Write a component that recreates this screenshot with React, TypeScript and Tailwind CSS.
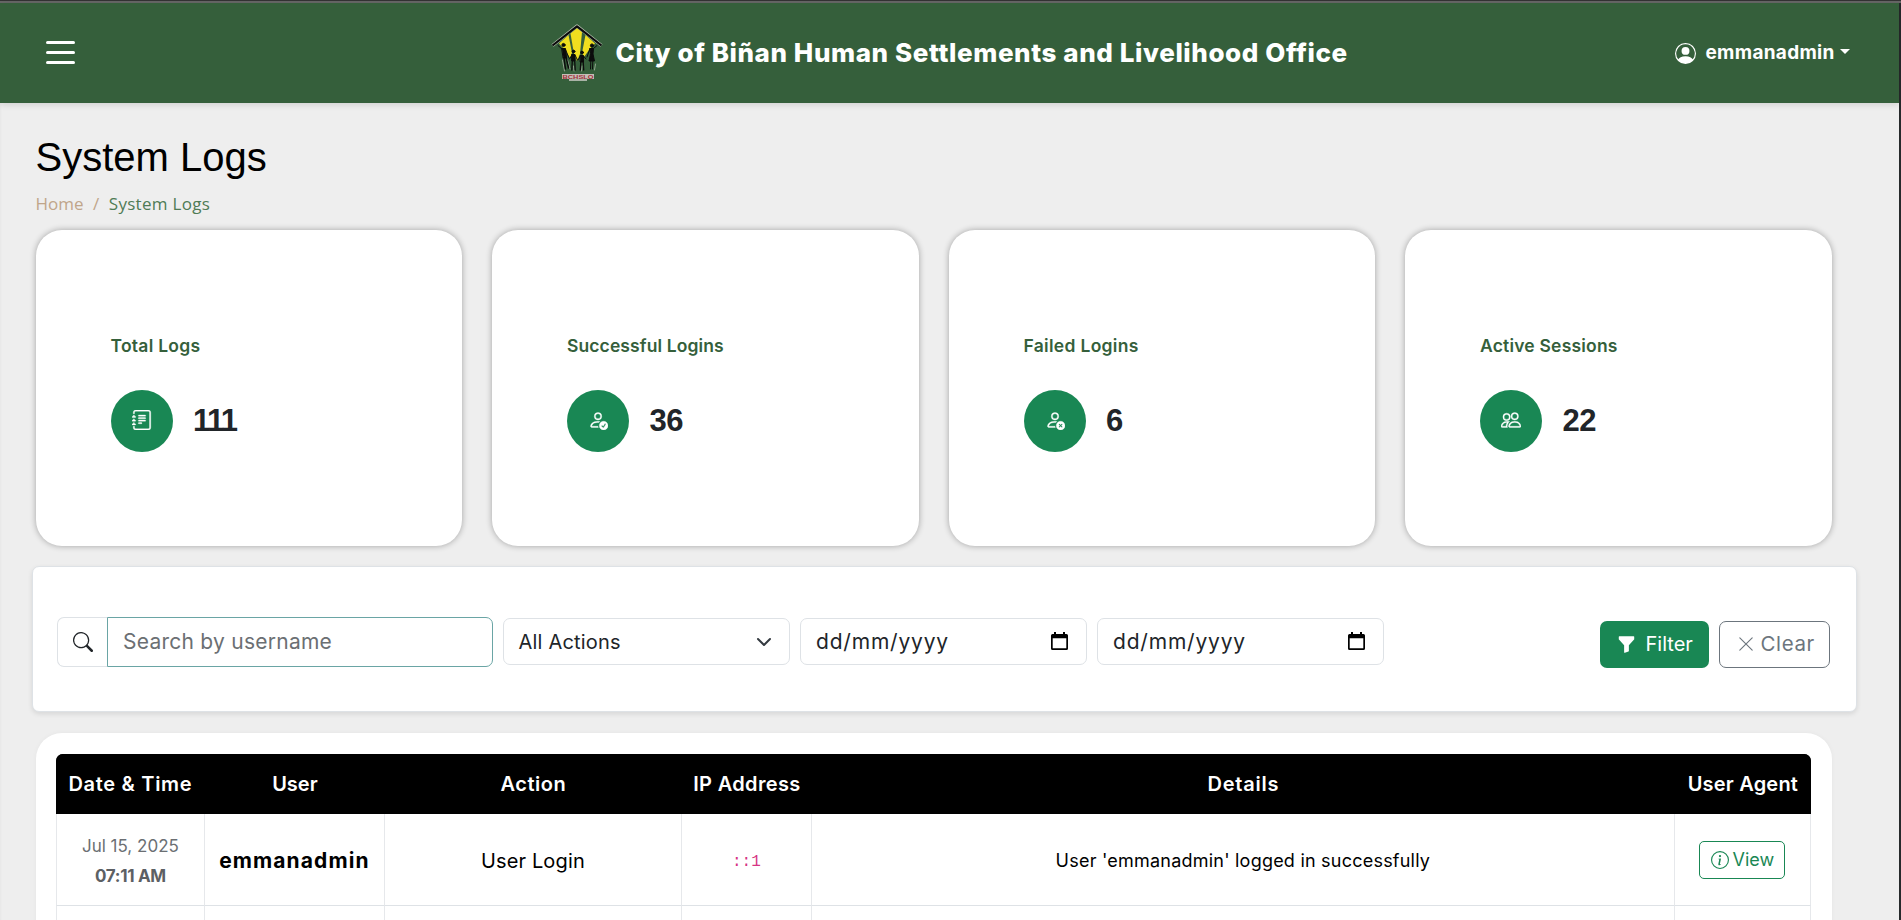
import React from "react";
import type { ReactNode } from "react";
import {
  BsFunnelFill,
  BsInfoCircle,
  BsJournalText,
  BsPeople,
  BsPersonCheck,
  BsPersonCircle,
  BsPersonX,
  BsSearch,
  BsXLg,
} from "react-icons/bs";

function Logo() {
  return (
    <svg className="h-[58px] w-[52px]" viewBox="0 0 52 58">
      <path d="M26 4 L31 8 L29 30 L26 37 L23 30 L19.500 9.500 Z" fill="#f0de1f" />
      <path d="M17.500 11 L8 19.500 L14 26 L19 34 L21 29 Z" fill="#f0de1f" />
      <path d="M34.500 11 L44 19.500 L38 26 L33 33 L31 29 Z" fill="#f0de1f" />
      <path d="M1.5 21.5 L26 2 L50.5 21.5" fill="none" stroke="#b4bfae" strokeWidth="3.2" strokeLinejoin="round" />
      <path d="M1.5 21.5 L26 2.4 L50.5 21.5" fill="none" stroke="#0b0b0b" strokeWidth="2.2" strokeLinejoin="round" />
      <g fill="none" stroke="#a9b5a4" strokeLinecap="round" strokeWidth="0.8">
        <path d="M11.500 36 L13.500 47 M16.500 36 L19 45 M23 47 L22.500 42 M30.500 47 L31 42 M44.500 40 L43.500 46" />
      </g>
      <g fill="#0b0b0b" stroke="#0b0b0b" strokeLinecap="round" strokeWidth="1">
        <circle cx="12.500" cy="21" r="1.600" />
        <path d="M11 24.500 L14.500 24.500 L15.500 34 L12.500 34 Z M7 21.500 L11.500 25.500 M14.500 25.500 L18 34" />
        <path d="M13 34 L14.500 45 M15.200 34 L17.500 44" strokeWidth="1.500" />
        <circle cx="22.500" cy="27.500" r="1.400" />
        <path d="M21 30.500 L24 30.500 L24 37 L21 37 Z M21 31 L18.500 35 M24 31 L26.500 36" />
        <path d="M21.300 37 L20.800 46 M23.700 37 L24.200 46" strokeWidth="1.300" />
        <circle cx="31" cy="28.500" r="1.400" />
        <path d="M29.500 31.500 L32.500 31.500 L32.500 38 L29.500 38 Z M29.500 32 L27 36 M32.500 32 L35 35" />
        <path d="M29.800 38 L29.300 46 M32.200 38 L32.700 46" strokeWidth="1.300" />
        <circle cx="41" cy="21.500" r="1.600" />
        <path d="M39 24.500 L42.500 24.500 L42 30 L43.500 37 L38 37 L39.500 30 Z M42.500 24.500 L46 21.500 M39 24.500 L36 33 M39.800 37 L39.500 45 M41.800 37 L41.500 45" />
      </g>
      <rect x="11" y="50" width="32" height="5" fill="#c3beb6" />
      <rect x="18" y="54.500" width="18" height="2.500" fill="#a9b3a6" />
      <text x="27" y="54.800" textAnchor="middle" textLength="31" lengthAdjust="spacingAndGlyphs" fontSize="6" fontWeight="700" fontFamily="Liberation Sans, sans-serif" fill="#a3323b">
        BCHSLO
      </text>
    </svg>
  );
}

function CalendarIcon() {
  return (
    <svg className="h-[19px] w-[17px]" viewBox="0 0 17 19">
      <path d="M3 0h2v2h7V0h2v2h1.500A1.500 1.500 0 0 1 17 3.500v13A1.500 1.500 0 0 1 15.500 18h-14A1.500 1.500 0 0 1 0 16.500v-13A1.500 1.500 0 0 1 1.500 2H3zM1.700 6.200v10.100h13.600V6.200z" fill="#000" fillRule="evenodd" />
    </svg>
  );
}

function StatCard({ label, value, spacing, icon }: { label: string; value: ReactNode; spacing: string; icon: ReactNode }) {
  return (
    <div className="flex flex-col justify-center rounded-[26px] bg-white px-[75px] shadow-[0_0_6px_rgba(0,0,0,0.32)]">
      <div className={`text-[17.5px] leading-[26px] font-semibold whitespace-nowrap text-[#355f3b] ${spacing}`}>{label}</div>
      <div className="mt-[31px] mb-[-9px] flex items-center gap-[20.5px]">
        <div className="flex h-[62px] w-[62px] items-center justify-center rounded-full bg-[#198754] pb-[2px] text-[20px] text-white [&_path]:stroke-white [&_path]:[stroke-width:0.25]">{icon}</div>
        <div className="pb-[2px] font-['Liberation_Sans',Arial,sans-serif] text-[31px] leading-none font-bold tracking-[-0.6px] text-[#212529]">{value}</div>
      </div>
    </div>
  );
}

function DateField() {
  return (
    <div className="flex h-[47px] w-[287px] items-center justify-between rounded-[7px] border border-[#dee2e6] pr-[18.5px] pl-[15px] text-[21px] tracking-[0.8px] text-[#212529]">
      <span>dd/mm/yyyy</span>
      <CalendarIcon />
    </div>
  );
}

const columns = [
  { label: "Date & Time", className: "w-[149px] tracking-[0.7px]" },
  { label: "User", className: "w-[180px]" },
  { label: "Action", className: "w-[297px] tracking-[0.5px]" },
  { label: "IP Address", className: "w-[130px] tracking-[0.35px]" },
  { label: "Details", className: "w-[863px] tracking-[0.75px]" },
  { label: "User Agent", className: "w-[136px] tracking-[0.2px]" },
];

export default function App() {
  return (
    <div className="flex h-[920px] w-[1901px] flex-col overflow-hidden bg-[#eeeeee] font-[Inter,'Noto_Sans',sans-serif]">
      <div className="h-[3px] shrink-0 border-t border-[#333333] bg-[#666666]" />
      <div className="flex min-h-0 flex-1 border-r-2 border-[#26292b]">
        <div className="flex min-w-0 flex-1 flex-col">
          <header className="flex h-[100px] shrink-0 items-center bg-[#355f3b] text-white shadow-[0_2px_6px_rgba(0,0,0,0.12)]">
            <button className="mb-[2px] ml-[46px] flex h-[23px] w-[29px] flex-col justify-between">
              <span className="h-[3px] w-full rounded-full bg-white" />
              <span className="h-[3px] w-full rounded-full bg-white" />
              <span className="h-[3px] w-full rounded-full bg-white" />
            </button>
            <div className="ml-[476px] flex items-center gap-[12.5px]">
              <Logo />
              <span className="mb-[2px] w-[735px] text-[26px] font-extrabold tracking-[0.59px] whitespace-nowrap">City of Biñan Human Settlements and Livelihood Office</span>
            </div>
            <div className="ml-[324.5px] flex items-center">
              <BsPersonCircle className="h-[21px] w-[21px]" />
              <span className="mt-[1px] ml-[9.5px] text-[19px] font-bold tracking-[0.3px]">emmanadmin</span>
              <span className="mb-[4px] ml-[5px] border-x-[5px] border-t-[5px] border-x-transparent border-t-white" />
            </div>
          </header>

          <main className="flex min-h-0 flex-1 flex-col shadow-[inset_2px_0_2px_-1px_rgba(0,0,0,0.03)]">
            <div className="pt-[30px] pl-[35.5px]">
              <h1 className="font-['Liberation_Sans',Arial,sans-serif] text-[40px] leading-[48px] text-black">System Logs</h1>
              <nav className="mt-[10px] flex font-['Open_Sans',sans-serif] text-[17px] leading-[26px] font-medium">
                <span className="text-[#c0a58a]">Home</span>
                <span className="mx-[9.5px] text-[#c0a58a]">/</span>
                <span className="tracking-[0.3px] text-[#4f7b55]">System Logs</span>
              </nav>
            </div>

            <section className="mt-[13px] ml-[35.5px] grid h-[316px] w-[1796px] shrink-0 grid-cols-4 gap-[30px]">
              <StatCard label="Total Logs" value={<span className="tracking-[-1.600px]">111</span>} spacing="tracking-[0.25px]" icon={<BsJournalText />} />
              <StatCard label="Successful Logins" value="36" spacing="tracking-[0.1px]" icon={<BsPersonCheck />} />
              <StatCard label="Failed Logins" value="6" spacing="tracking-[0.3px]" icon={<BsPersonX />} />
              <StatCard label="Active Sessions" value="22" spacing="tracking-[0.2px]" icon={<BsPeople />} />
            </section>

            <section className="mt-5 ml-[31.5px] flex h-[146px] w-[1825px] shrink-0 items-center rounded-[7px] border border-[#dee2e6] bg-white pt-[5px] pr-[26px] pl-[24.5px] shadow-[0_2px_5px_rgba(0,0,0,0.1)]">
              <div className="flex h-[50px] w-[436px]">
                <div className="flex w-[50px] items-center justify-center rounded-l-[7px] border border-r-0 border-[#dee2e6] text-[20px] text-[#212529]">
                  <BsSearch />
                </div>
                <div className="flex flex-1 items-center rounded-r-[7px] border border-[#6aa5a5] pl-[15px] text-[21px] tracking-[0.25px] text-[#6b6f73]">Search by username</div>
              </div>
              <div className="ml-[10px] flex h-[47px] w-[287px] items-center justify-between rounded-[7px] border border-[#dee2e6] pr-[17px] pl-[14.5px] text-[20px] tracking-[0.2px] text-[#212529]">
                <span>All Actions</span>
                <svg className="h-4 w-4" viewBox="0 0 16 16" fill="none" stroke="#343a40" strokeWidth="2" strokeLinecap="round" strokeLinejoin="round">
                  <path d="m2 5 6 6 6-6" />
                </svg>
              </div>
              <div className="ml-[10px] flex gap-[10px]">
                <DateField />
                <DateField />
              </div>
              <div className="mt-[5px] ml-auto flex gap-[10px] text-[20px]">
                <button className="flex h-[47px] w-[109px] items-center rounded-[7px] bg-[#198754] pl-[17px] text-white">
                  <BsFunnelFill className="h-[19px] w-[19px]" />
                  <span className="ml-[10px]">Filter</span>
                </button>
                <button className="flex h-[47px] w-[111px] items-center rounded-[7px] border border-[#6c757d] pl-[17px] text-[#6c757d]">
                  <BsXLg className="h-[18px] w-[18px]" />
                  <span className="ml-[6px] text-[20.5px] tracking-[0.6px]">Clear</span>
                </button>
              </div>
            </section>

            <section className="mt-[21px] ml-[35.5px] w-[1796.5px] flex-1 rounded-t-[26px] bg-white px-5 pt-[21px] shadow-[0_0_5px_rgba(0,0,0,0.04)]">
              <table className="ml-[0.4px] w-[1755px] table-fixed border-separate border-spacing-0 text-center">
                <thead>
                  <tr className="h-[60px] bg-black text-[20px] text-white">
                    {columns.map((c) => (
                      <th key={c.label} className={`bg-black p-0 font-semibold whitespace-nowrap first:rounded-tl-[7px] last:rounded-tr-[7px] ${c.className}`}>
                        {c.label}
                      </th>
                    ))}
                  </tr>
                </thead>
                <tbody>
                  <tr className="h-[92px] text-black [&>td]:border-r [&>td]:border-b [&>td]:border-r-[#e6e8eb] [&>td]:border-b-[#dee2e6] [&>td]:p-0 [&>td]:pt-[2px]">
                    <td className="border-l border-l-[#e6e8eb] text-[17px] leading-[30px] text-[#6b6f73]">
                      <div>Jul 15, 2025</div>
                      <div className="font-bold tracking-[-0.3px] text-[#5c6064]">07:11 AM</div>
                    </td>
                    <td className="text-[21px] font-bold tracking-[1.100px]">emmanadmin</td>
                    <td className="text-[20px] tracking-[0.15px]">User Login</td>
                    <td className="font-['Liberation_Mono',monospace] text-[16px] text-[#d63384]">
                      <span className="inline-block pt-[3px]">::1</span>
                    </td>
                    <td className="text-[18px] tracking-[0.22px]">User 'emmanadmin' logged in successfully</td>
                    <td>
                      <span className="mb-[2px] inline-flex h-[38px] w-[86px] items-center justify-center gap-[4px] rounded-[5px] border border-[#198754] align-middle text-[18px] text-[#198754]">
                        <BsInfoCircle className="h-[18px] w-[18px]" />
                        View
                      </span>
                    </td>
                  </tr>
                  <tr className="h-[92px] [&>td]:border-r [&>td]:border-[#e6e8eb]">
                    {columns.map((c) => (
                      <td key={c.label} className="first:border-l" />
                    ))}
                  </tr>
                </tbody>
              </table>
            </section>
          </main>
        </div>
      </div>
    </div>
  );
}
